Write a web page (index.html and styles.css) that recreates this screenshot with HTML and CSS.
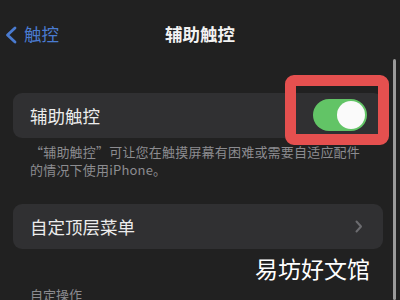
FILE: index.html
```html
<!DOCTYPE html>
<html lang="zh-CN">
<head>
<meta charset="utf-8">
<link rel="stylesheet" href="styles.css">
</head>
<body>
<div class="screen">
  <header class="nav">
    <div class="back">
      <svg class="chev" width="14" height="18" viewBox="0 0 14 18"><path d="M11 2 L3.5 9 L11 16" fill="none" stroke="#4a7bd0" stroke-width="2.8" stroke-linecap="round" stroke-linejoin="round"/></svg>
      <span class="back-text">触控</span>
    </div>
    <div class="title">辅助触控</div>
  </header>

  <div class="card card-first">
    <span class="label">辅助触控</span>
    <div class="toggle"><div class="knob"></div></div>
    <div class="highlight"></div>
  </div>
  <p class="desc">“辅助触控”可让您在触摸屏幕有困难或需要自适应配件<br>的情况下使用iPhone。</p>

  <div class="card card-second">
    <span class="label">自定顶层菜单</span>
    <svg class="arrow" width="8" height="13" viewBox="0 0 8 13"><path d="M1.5 1.5 L6 6.5 L1.5 11.5" fill="none" stroke="#6c6c70" stroke-width="2" stroke-linecap="round" stroke-linejoin="round"/></svg>
  </div>

  <div class="section">自定操作</div>

  <div class="watermark">易坊好文馆</div>
  <div class="scrollbar"></div>
</div>
</body>
</html>
```
FILE: styles.css
```css
* { box-sizing: border-box; }
html, body { margin: 0; padding: 0; }
body {
  background: #212121;
  font-family: "Noto Sans CJK SC", "Noto Sans", sans-serif;
  width: 400px;
  height: 300px;
  overflow: hidden;
}
.screen {
  position: relative;
  width: 400px;
  height: 300px;
  padding: 22px 13px 0 13px;
}
.nav {
  position: relative;
  height: 24px;
  display: flex;
  align-items: center;
  justify-content: center;
}
.back {
  position: absolute;
  left: -9px;
  top: 0;
  height: 24px;
  display: flex;
  align-items: center;
  gap: 6px;
}
.chev { display: block; margin-top: 1px; }
.back-text {
  color: #4a7bd0;
  font-size: 17.5px;
  line-height: 24px;
}
.title {
  color: #f2f2f2;
  font-size: 17.5px;
  font-weight: 600;
  line-height: 24px;
}
.card {
  position: relative;
  background: #303032;
  border-radius: 9px;
  height: 45px;
  width: 370px;
  display: flex;
  align-items: center;
  padding: 0 17px;
}
.card-first { margin-top: 47px; }
.card-second { margin-top: 25px; justify-content: space-between; padding-right: 20px; }
.label {
  color: #ececec;
  font-size: 17.5px;
  line-height: 22px;
}
.toggle {
  position: absolute;
  left: 300px;
  top: 6px;
  width: 54px;
  height: 32px;
  border-radius: 16px;
  background: #62c466;
}
.knob {
  position: absolute;
  right: 2px;
  top: 2px;
  width: 28px;
  height: 28px;
  border-radius: 50%;
  background: #fafafa;
}
.highlight {
  position: absolute;
  left: 272px;
  top: -18px;
  width: 104px;
  height: 70px;
  border: 11px solid #e5504f;
  border-radius: 9px;
}
.desc {
  margin: 5px 0 0 0;
  padding-left: 17px;
  color: #8c8c90;
  font-size: 13px;
  line-height: 18px;
  letter-spacing: 0.2px;
  white-space: nowrap;
}
.arrow { display: block; }
.section {
  margin-top: 37px;
  padding-left: 17px;
  color: #8c8c90;
  font-size: 13px;
  line-height: 18px;
}
.watermark {
  position: absolute;
  left: 255px;
  top: 254px;
  color: #ffffff;
  font-size: 23px;
  line-height: 28px;
}
.scrollbar {
  position: absolute;
  left: 393px;
  top: 59px;
  width: 2.5px;
  height: 241px;
  background: #9a9a9a;
  border-radius: 2px;
}
```
